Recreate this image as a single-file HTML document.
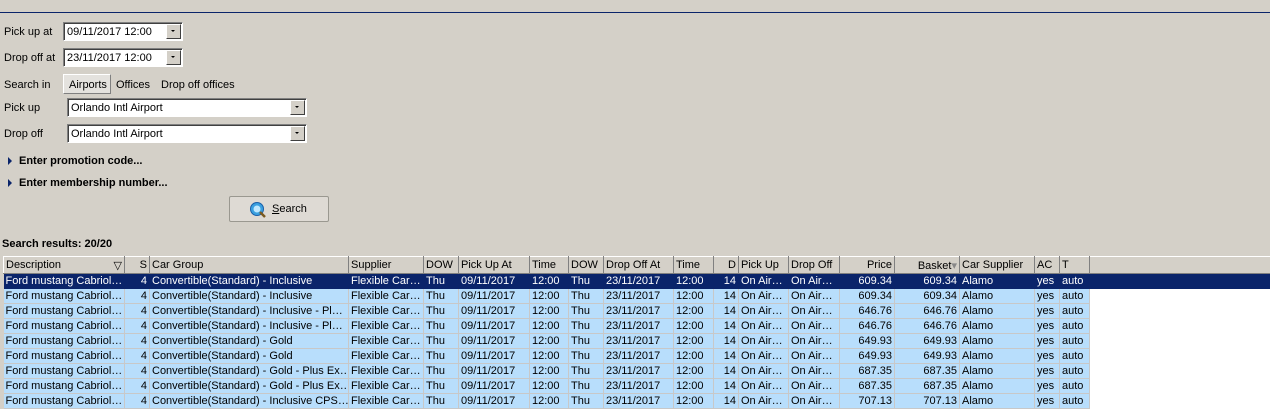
<!DOCTYPE html><html><head><style>
body{margin:0;width:1270px;height:401px;background:#d4d0c8;font-family:"Liberation Sans",sans-serif;font-size:11px;overflow:hidden;position:relative;color:#000}
.a{position:absolute;white-space:nowrap}
.inp{position:absolute;background:#fff;border:1px solid;border-color:#808080 #fff #fff #808080;box-shadow:inset 1px 1px 0 #404040;height:19px;box-sizing:border-box;padding:3px 0 0 3px}
.btn{position:absolute;width:15px;height:15px;background:#d4d0c8;border:1px solid;border-color:#fff #404040 #404040 #fff;box-sizing:border-box;top:1px;right:1px}
.btn:after{content:"";position:absolute;left:4px;top:5px;border:2px solid transparent;border-top:2px solid #000;border-bottom:0}
b{font-weight:bold}
table{position:absolute;left:3px;top:256px;border-collapse:collapse;table-layout:fixed;width:1267px}
td{height:15px;padding:0 2px;border-right:1px solid #c8c8c8;border-bottom:1px solid #c8c8c8;white-space:nowrap;overflow:hidden;box-sizing:border-box;background:#b8defc;line-height:14px}
th{height:17px;font-weight:normal;text-align:left;padding:0 2px;background:#d4d0c8;border:1px solid;border-color:#fff #808080 #808080 #fff;box-sizing:border-box;white-space:nowrap;overflow:hidden}
.r{text-align:right}
tr.s td{background:#0a246a;color:#fff;border-color:#0a246a}
td.e{background:#fff;border:0}
</style></head><body>
<div class="a" style="left:0;top:0;width:1270px;height:12px;border-bottom:1px solid #0a246a"></div>
<div class="a" style="left:4px;top:26px">Pick up at</div>
<div class="inp" style="left:63px;top:22px;width:120px">09/11/2017 12:00<div class="btn"></div></div>
<div class="a" style="left:4px;top:52px">Drop off at</div>
<div class="inp" style="left:63px;top:48px;width:120px">23/11/2017 12:00<div class="btn"></div></div>
<div class="a" style="left:4px;top:79px">Search in</div>
<div class="a" style="left:63px;top:74px;width:48px;height:20px;background:#e4e2de;border:1px solid;border-color:#fff #808080 #808080 #fff;box-sizing:border-box"></div>
<div class="a" style="left:69px;top:79px">Airports</div>
<div class="a" style="left:116px;top:79px">Offices</div>
<div class="a" style="left:161px;top:79px">Drop off offices</div>
<div class="a" style="left:4px;top:102px">Pick up</div>
<div class="inp" style="left:67px;top:98px;width:240px">Orlando Intl Airport<div class="btn"></div></div>
<div class="a" style="left:4px;top:128px">Drop off</div>
<div class="inp" style="left:67px;top:124px;width:240px">Orlando Intl Airport<div class="btn"></div></div>
<div class="a" style="left:8px;top:157px;border-left:4px solid #0a246a;border-top:4px solid transparent;border-bottom:4px solid transparent;height:0;width:0"></div>
<div class="a" style="left:19px;top:155px"><b>Enter promotion code...</b></div>
<div class="a" style="left:8px;top:179px;border-left:4px solid #0a246a;border-top:4px solid transparent;border-bottom:4px solid transparent;height:0;width:0"></div>
<div class="a" style="left:19px;top:177px"><b>Enter membership number...</b></div>
<div class="a" style="left:229px;top:196px;width:100px;height:26px;background:#dedad4;border:1px solid #9a9890;border-radius:2px;box-sizing:border-box"></div>
<svg class="a" style="left:249px;top:201px" width="18" height="18"><circle cx="8" cy="8" r="6.5" fill="#3aa0e0" stroke="#1a5fa8"/><circle cx="8" cy="8" r="3.5" fill="#bfe8ff"/><path d="M11 11 L16 16" stroke="#7a5a20" stroke-width="2.5"/></svg>
<div class="a" style="left:272px;top:203px"><u>S</u>earch</div>
<div class="a" style="left:2px;top:238px"><b>Search results: 20/20</b></div>
<table>
<colgroup><col style="width:121px"><col style="width:25px"><col style="width:199px"><col style="width:75px"><col style="width:35px"><col style="width:71px"><col style="width:39px"><col style="width:35px"><col style="width:70px"><col style="width:40px"><col style="width:25px"><col style="width:50px"><col style="width:51px"><col style="width:55px"><col style="width:65px"><col style="width:75px"><col style="width:25px"><col style="width:30px"><col style="width:181px"></colgroup>
<tr><th>Description<span style="float:right">&#9661;</span></th><th class="r">S</th><th>Car Group</th><th>Supplier</th><th>DOW</th><th>Pick Up At</th><th>Time</th><th>DOW</th><th>Drop Off At</th><th>Time</th><th class="r">D</th><th>Pick Up</th><th>Drop Off</th><th class="r">Price</th><th class="r">Basket<span style="color:#888">&#9662;</span></th><th>Car Supplier</th><th>AC</th><th>T</th><th></th></tr>
<tr class="s"><td>Ford mustang Cabriol…</td><td class="r">4</td><td>Convertible(Standard) - Inclusive</td><td>Flexible Car…</td><td>Thu</td><td>09/11/2017</td><td>12:00</td><td>Thu</td><td>23/11/2017</td><td>12:00</td><td class="r">14</td><td>On Air…</td><td>On Air…</td><td class="r">609.34</td><td class="r">609.34</td><td>Alamo</td><td>yes</td><td>auto</td><td class="e"></td></tr>
<tr><td>Ford mustang Cabriol…</td><td class="r">4</td><td>Convertible(Standard) - Inclusive</td><td>Flexible Car…</td><td>Thu</td><td>09/11/2017</td><td>12:00</td><td>Thu</td><td>23/11/2017</td><td>12:00</td><td class="r">14</td><td>On Air…</td><td>On Air…</td><td class="r">609.34</td><td class="r">609.34</td><td>Alamo</td><td>yes</td><td>auto</td><td class="e"></td></tr>
<tr><td>Ford mustang Cabriol…</td><td class="r">4</td><td>Convertible(Standard) - Inclusive - Pl…</td><td>Flexible Car…</td><td>Thu</td><td>09/11/2017</td><td>12:00</td><td>Thu</td><td>23/11/2017</td><td>12:00</td><td class="r">14</td><td>On Air…</td><td>On Air…</td><td class="r">646.76</td><td class="r">646.76</td><td>Alamo</td><td>yes</td><td>auto</td><td class="e"></td></tr>
<tr><td>Ford mustang Cabriol…</td><td class="r">4</td><td>Convertible(Standard) - Inclusive - Pl…</td><td>Flexible Car…</td><td>Thu</td><td>09/11/2017</td><td>12:00</td><td>Thu</td><td>23/11/2017</td><td>12:00</td><td class="r">14</td><td>On Air…</td><td>On Air…</td><td class="r">646.76</td><td class="r">646.76</td><td>Alamo</td><td>yes</td><td>auto</td><td class="e"></td></tr>
<tr><td>Ford mustang Cabriol…</td><td class="r">4</td><td>Convertible(Standard) - Gold</td><td>Flexible Car…</td><td>Thu</td><td>09/11/2017</td><td>12:00</td><td>Thu</td><td>23/11/2017</td><td>12:00</td><td class="r">14</td><td>On Air…</td><td>On Air…</td><td class="r">649.93</td><td class="r">649.93</td><td>Alamo</td><td>yes</td><td>auto</td><td class="e"></td></tr>
<tr><td>Ford mustang Cabriol…</td><td class="r">4</td><td>Convertible(Standard) - Gold</td><td>Flexible Car…</td><td>Thu</td><td>09/11/2017</td><td>12:00</td><td>Thu</td><td>23/11/2017</td><td>12:00</td><td class="r">14</td><td>On Air…</td><td>On Air…</td><td class="r">649.93</td><td class="r">649.93</td><td>Alamo</td><td>yes</td><td>auto</td><td class="e"></td></tr>
<tr><td>Ford mustang Cabriol…</td><td class="r">4</td><td>Convertible(Standard) - Gold - Plus Ex…</td><td>Flexible Car…</td><td>Thu</td><td>09/11/2017</td><td>12:00</td><td>Thu</td><td>23/11/2017</td><td>12:00</td><td class="r">14</td><td>On Air…</td><td>On Air…</td><td class="r">687.35</td><td class="r">687.35</td><td>Alamo</td><td>yes</td><td>auto</td><td class="e"></td></tr>
<tr><td>Ford mustang Cabriol…</td><td class="r">4</td><td>Convertible(Standard) - Gold - Plus Ex…</td><td>Flexible Car…</td><td>Thu</td><td>09/11/2017</td><td>12:00</td><td>Thu</td><td>23/11/2017</td><td>12:00</td><td class="r">14</td><td>On Air…</td><td>On Air…</td><td class="r">687.35</td><td class="r">687.35</td><td>Alamo</td><td>yes</td><td>auto</td><td class="e"></td></tr>
<tr><td>Ford mustang Cabriol…</td><td class="r">4</td><td>Convertible(Standard) - Inclusive CPS…</td><td>Flexible Car…</td><td>Thu</td><td>09/11/2017</td><td>12:00</td><td>Thu</td><td>23/11/2017</td><td>12:00</td><td class="r">14</td><td>On Air…</td><td>On Air…</td><td class="r">707.13</td><td class="r">707.13</td><td>Alamo</td><td>yes</td><td>auto</td><td class="e"></td></tr>
</table>
</body></html>
